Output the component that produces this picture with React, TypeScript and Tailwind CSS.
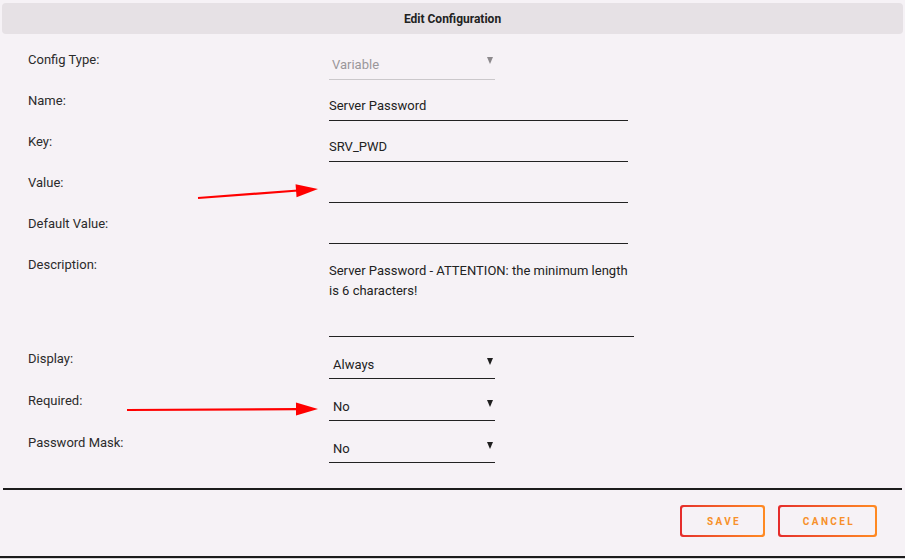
import type { ReactNode } from "react";

const font = { fontFamily: "Roboto, 'Noto Sans', sans-serif" };

function Caret({ muted }: { muted?: boolean }) {
  return (
    <svg viewBox="0 0 6 7" className={`h-[7px] w-[6px] ${muted ? "fill-[#8d8a8d]" : "fill-[#1f1f1f]"}`}>
      <path d="M0 0h6L3 7z" />
    </svg>
  );
}

function Row({ label, height = "h-[41px]", children }: { label: string; height?: string; children: ReactNode }) {
  return (
    <div className={`flex items-start ${height}`}>
      <div className="w-[301px] shrink-0 pt-[3px] leading-5 text-[#2b2b2b]">{label}</div>
      {children}
    </div>
  );
}

function TextField({ value }: { value?: string }) {
  return (
    <div className="mt-[6px] h-[27px] w-[299px] border-b border-[#222] pt-[2px] leading-5 text-[#222]">{value}</div>
  );
}

function SelectField({ value, disabled }: { value: string; disabled?: boolean }) {
  return (
    <div
      className={`mt-[6px] flex h-[27px] w-[166px] items-start justify-between border-b pt-[2px] pr-[2px] leading-5 ${
        disabled ? "border-[#cbc8cb] pl-[3px] text-[#9a979a]" : "border-[#222] pl-[4px] text-[#222]"
      }`}
    >
      <span className={disabled ? "" : "pt-[1px]"}>{value}</span>
      <span className={disabled ? "pt-[2px]" : "pt-[4px]"}>
        <Caret muted={disabled} />
      </span>
    </div>
  );
}

function OutlineButton({ children, width }: { children: ReactNode; width: string }) {
  return (
    <div className={`rounded-[3px] bg-gradient-to-r from-[#e52b2b] to-[#ff8a22] p-[2px] ${width}`}>
      <div className="flex h-[28px] items-center justify-center rounded-[2px] bg-[#f6f2f6] pl-[3px] text-[10px] font-bold tracking-[0.24em] text-[#f7902a]">
        {children}
      </div>
    </div>
  );
}

function Arrow({ x1, y1, x2, y2 }: { x1: number; y1: number; x2: number; y2: number }) {
  const ang = Math.atan2(y2 - y1, x2 - x1);
  const len = 22;
  const half = 6.5;
  const bx = x2 - Math.cos(ang) * len;
  const by = y2 - Math.sin(ang) * len;
  const nx = -Math.sin(ang) * half;
  const ny = Math.cos(ang) * half;
  return (
    <g>
      <line x1={x1} y1={y1} x2={bx + Math.cos(ang) * 2} y2={by + Math.sin(ang) * 2} stroke="#ff0000" strokeWidth={2.2} />
      <polygon points={`${x2},${y2} ${bx + nx},${by + ny} ${bx - nx},${by - ny}`} fill="#ff0000" />
    </g>
  );
}

export default function App() {
  return (
    <div className="relative h-[559px] w-[905px] overflow-hidden bg-[#d9d6d9] text-[13px]" style={font}>
      <div className="flex h-[558px] flex-col border-b-2 border-[#1c1c1c] bg-[#f6f2f6]">
        <div className="mx-[2px] mt-[3px] flex h-[31px] items-center justify-center rounded-[4px] bg-[#e6e1e5] text-[12px] font-bold text-[#222]">
          Edit Configuration
        </div>

        <div className="pl-[28px] pt-[13px]">
          <Row label="Config Type:">
            <SelectField value="Variable" disabled />
          </Row>
          <Row label="Name:">
            <TextField value="Server Password" />
          </Row>
          <Row label="Key:">
            <TextField value="SRV_PWD" />
          </Row>
          <Row label="Value:">
            <TextField />
          </Row>
          <Row label="Default Value:">
            <TextField />
          </Row>
          <Row label="Description:" height="h-[94px]">
            <div className="mt-[6px] h-[79px] w-[305px] border-b border-[#222] pt-[3px] leading-5 text-[#222]">
              Server Password - ATTENTION: the minimum length is 6 characters!
            </div>
          </Row>
          <Row label="Display:" height="h-[42px]">
            <SelectField value="Always" />
          </Row>
          <Row label="Required:" height="h-[42px]">
            <SelectField value="No" />
          </Row>
          <Row label="Password Mask:" height="h-[42px]">
            <SelectField value="No" />
          </Row>
        </div>

        <div className="mx-[3px] mt-[16px] border-t-2 border-[#1c1c1c]" />

        <div className="flex justify-end gap-[13px] pr-[28px] pt-[15px]">
          <OutlineButton width="w-[85px]">SAVE</OutlineButton>
          <OutlineButton width="w-[99px]">CANCEL</OutlineButton>
        </div>
      </div>

      <svg className="pointer-events-none absolute left-0 top-0" width={905} height={559}>
        <Arrow x1={198} y1={198} x2={318} y2={189} />
        <Arrow x1={127} y1={410} x2={318} y2={409} />
      </svg>
    </div>
  );
}
